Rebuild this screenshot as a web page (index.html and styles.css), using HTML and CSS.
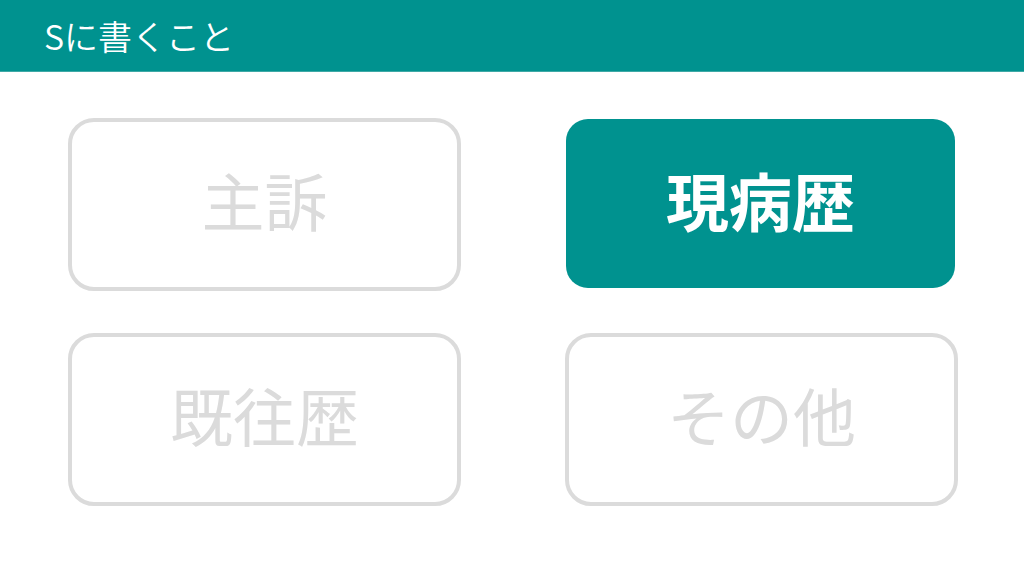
FILE: index.html
```html
<!DOCTYPE html>
<html lang="ja">
<head>
    <meta charset="UTF-8">
    <meta name="viewport" content="width=device-width, initial-scale=1.0">
    <title>Sに書くこと</title>
    <link rel="stylesheet" href="styles.css">
</head>
<body>
    <header class="top-bar">
        <h1 class="top-title">Sに書くこと</h1>
    </header>

    <main class="choice-grid">
        <div class="choice">主訴</div>
        <div class="choice choice-active">現病歴</div>
        <div class="choice">既往歴</div>
        <div class="choice">その他</div>
    </main>
</body>
</html>
```

FILE: styles.css
```css
body {
    margin: 0;
    font-family: 'Noto Sans CJK JP', 'Noto Sans', sans-serif;
    background-color: #ffffff;
    color: #333;
}
.top-bar {
    height: 72px;
    background-color: #00928f;
    border-bottom: 1px solid #3fa9a6;
    box-sizing: border-box;
    display: flex;
    align-items: center;
    padding-left: 44px;
}
.top-title {
    margin: 0;
    font-size: 34px;
    font-weight: 350;
    color: #ffffff;
    line-height: 1;
}
.choice-grid {
    display: grid;
    grid-template-columns: 393px 393px;
    grid-template-rows: 173px 173px;
    column-gap: 104px;
    row-gap: 42px;
    padding: 46px 0 0 68px;
}
.choice {
    border: 4px solid #dbdbdb;
    border-radius: 26px;
    display: flex;
    justify-content: center;
    align-items: center;
    padding-bottom: 12px;
    box-sizing: border-box;
    font-size: 63px;
    color: #dbdbdb;
    line-height: 1;
}
.choice-active {
    margin: 1px 3px 3px 1px;
    border: none;
    border-radius: 22px;
    padding-bottom: 10px;
    background-color: #00928f;
    color: #ffffff;
    font-weight: 700;
}
```
